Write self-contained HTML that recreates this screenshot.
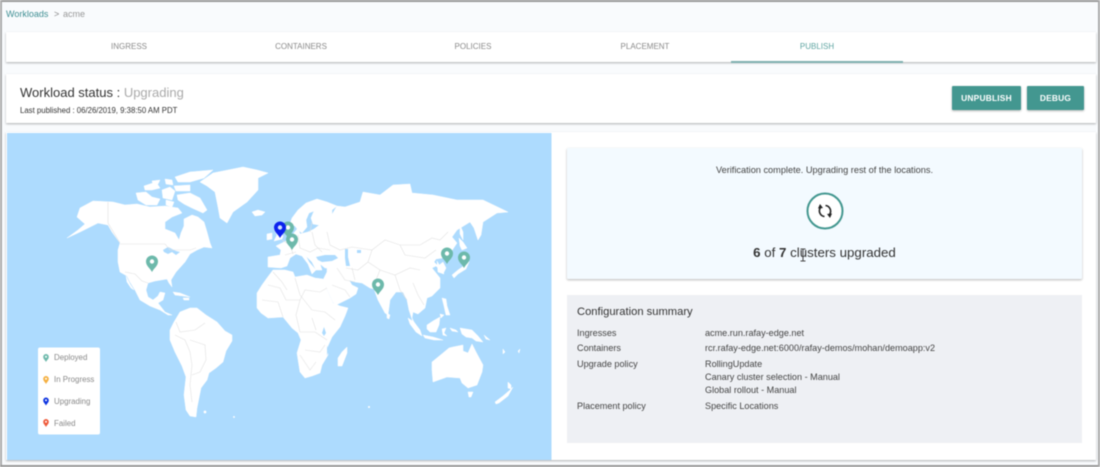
<!DOCTYPE html>
<html>
<head>
<meta charset="utf-8">
<style>
html,body{margin:0;padding:0;background:#fff}
body{width:1100px;height:467px;overflow:hidden;position:relative;font-family:"Liberation Sans",sans-serif}
#p{position:absolute;left:0;top:0;width:1100px;height:467px;background:#F9FBFD;filter:blur(.5px);overflow:hidden}
#p div{position:absolute;box-sizing:border-box}
.t{white-space:nowrap;line-height:12px}
.tab{top:41px;width:172px;text-align:center;font-size:8px;color:#8a8a8a;line-height:12px}
.btn{background:#439790;color:#fff;font-size:8.4px;font-weight:bold;text-align:center;line-height:24px;height:24px;top:86px;border-radius:1px;box-shadow:0 1px 2px rgba(0,0,0,.3);letter-spacing:.2px}
.l{left:577px;font-size:9.1px;color:#444;line-height:12px;white-space:nowrap}
.v{left:705px;font-size:9.1px;color:#444;line-height:12px;white-space:nowrap}
.lg{left:54px;font-size:7.9px;color:#8a8a8a;line-height:10px;white-space:nowrap}
</style>
</head>
<body>
<div id="p">
<div style="left:0;top:0;width:1100px;height:1.5px;background:#999"></div>
<div style="left:0;top:0;width:1.5px;height:467px;background:#aaa"></div>
<div style="left:0;top:465px;width:1100px;height:2px;background:#999"></div>
<div style="left:1098px;top:0;width:2px;height:467px;background:#aaa"></div>

<div class="t" style="left:6px;top:8px;font-size:9px;color:#3f8f93">Workloads</div>
<div class="t" style="left:54px;top:8px;font-size:9px;color:#888">&gt;</div>
<div class="t" style="left:63px;top:8px;font-size:9px;color:#999">acme</div>

<div style="left:6px;top:32px;width:1090px;height:30px;background:#fff;box-shadow:0 1px 2px rgba(0,0,0,.3)"></div>
<div class="tab" style="left:43px">INGRESS</div>
<div class="tab" style="left:215px">CONTAINERS</div>
<div class="tab" style="left:387px">POLICIES</div>
<div class="tab" style="left:559px">PLACEMENT</div>
<div class="tab" style="left:731px;color:#5fa5a2">PUBLISH</div>
<div style="left:731px;top:61px;width:172px;height:2px;background:#7fb0b0"></div>

<div style="left:6px;top:74px;width:1090px;height:48.5px;background:#fff;box-shadow:0 1px 2px rgba(0,0,0,.3)"></div>
<div class="t" style="left:20px;top:85px;font-size:13px;line-height:15px;color:#333">Workload status : <span style="color:#aaa">Upgrading</span></div>
<div class="t" style="left:20px;top:105px;font-size:7.8px;color:#333">Last published : 06/26/2019, 9:38:50 AM PDT</div>
<div class="btn" style="left:952px;width:69px">UNPUBLISH</div>
<div class="btn" style="left:1027px;width:57px">DEBUG</div>

<div style="left:6px;top:132px;width:1090px;height:328px;background:#fff;box-shadow:0 1px 2px rgba(0,0,0,.3)"></div>

<svg style="position:absolute;left:0;top:0" width="1100" height="467" viewBox="0 0 1100 467">
<defs><clipPath id="c"><rect x="7" y="133" width="544.5" height="327"/></clipPath></defs>
<g clip-path="url(#c)">
<rect x="7" y="133" width="545" height="327" fill="#ADDBFE"/>
<g fill="#fff" stroke="#fff" stroke-width=".5" stroke-linejoin="round">
<!-- North America -->
<path d="M77,217 L80,208 L93,201 L113,202 L125,205 L137,204 L150,207 L165,206 L178,208 L182,213 L172,217 L165,222 L165,229 L175,233 L179,240 L181,233 L184,226 L184,219 L192,215 L198,217 L204,222 L207,232 L210,243 L212,248 L204,247 L197,250 L190,254 L185,262 L176,272 L171,280 L172,287 L169,283 L167,279 L155,281 L148,283 L146,290 L148,297 L153,300 L158,296 L160,292 L165,293 L163,300 L158,303 L165,312 L172,315 L168,315 L160,310 L150,306 L140,300 L135,290 L130,282 L127,276 L120,272 L118,262 L118,250 L120,243 L112,232 L108,225 L98,223 L90,227 L80,232 L67,238 L78,230 L85,224Z"/>
<!-- Baja -->
<path d="M126,276 L130,284 L134,290 L131,288 L127,282Z"/>
<!-- Arctic islands -->
<path d="M175,177 L190,172 L213,170 L204,178 L190,182 L178,182Z"/>
<path d="M177,195 L190,193 L200,198 L207,210 L203,213 L192,208 L184,204 L178,200Z"/>
<path d="M136,193 L146,192 L152,197 L160,199 L157,205 L146,205 L138,200Z"/>
<path d="M144,186 L156,182 L160,188 L152,190 L145,190Z"/>
<path d="M162,190 L170,187 L175,191 L172,200 L163,198Z"/>
<path d="M165,179 L172,180 L173,185 L166,184Z"/>
<path d="M174,186 L190,185 L190,191 L176,191Z"/>
<path d="M152,181 L160,180 L158,184 L153,184Z"/>
<path d="M166,200 L174,202 L172,207 L166,205Z"/>
<!-- Greenland -->
<path d="M200,182 L213,173 L243,167 L257,170 L268,173 L258,178 L258,190 L247,202 L233,212 L227,223 L220,218 L218,207 L215,192 L207,186Z"/>
<!-- Iceland -->
<path d="M252,212 L258,210 L265,212 L262,215 L255,216Z"/>
<!-- Caribbean -->
<path d="M173,292 L180,293 L190,297 L183,296 L175,295Z"/>
<path d="M183,298 L189,298 L189,300 L184,300Z"/>
<!-- South America -->
<path d="M170,330 L174,322 L180,312 L190,308 L197,308 L206,315 L217,322 L225,331 L232,335 L232,341 L226,351 L223,362 L216,368 L209,373 L207,380 L201,388 L199,398 L197,408 L196,417 L190,416 L186,410 L184,395 L186,377 L182,366 L175,352 L170,340Z"/>
<!-- Africa -->
<path d="M323,279 L326,288 L333,303 L340,306 L348,308 L345,316 L340,327 L332,337 L327,348 L328,355 L322,365 L320,373 L312,376 L305,378 L300,372 L297,353 L301,340 L298,333 L292,328 L283,317 L268,318 L261,313 L257,308 L257,293 L262,285 L267,278 L273,270 L285,270 L293,272 L295,277 L307,275 L315,278Z"/>
<!-- Madagascar -->
<path d="M347,347 L347,353 L342,366 L338,366 L338,358 L342,352Z"/>
<!-- UK / Ireland -->
<path d="M276,223 L281,224 L279,229 L283,236 L282,239 L274,241 L277,235 L274,229Z"/>
<path d="M267,234 L272,233 L272,239 L267,240Z"/>
<!-- Scandinavia -->
<path d="M290,224 L292,218 L298,210 L306,203 L317,199 L327,202 L337,206 L332,210 L332,218 L324,226 L313,224 L311,218 L314,211 L309,213 L306,220 L307,227 L302,233 L298,230 L295,226Z"/>
<!-- Eurasia -->
<path d="M268,267 L268,257 L280,255 L281,250 L276,246 L286,241 L293,234 L298,228 L300,234 L308,232 L314,229 L318,226 L322,224 L330,218 L337,206 L345,207 L360,202 L363,192 L380,195 L393,185 L410,184 L412,193 L433,195 L457,200 L483,200 L508,212 L497,213 L483,222 L481,235 L478,240 L474,228 L470,222 L457,230 L452,237 L457,243 L449,255 L442,258 L436,259 L434,262 L438,266 L443,262 L446,268 L443,274 L440,270 L436,266 L432,268 L440,278 L440,288 L432,296 L427,298 L425,308 L418,314 L413,312 L412,318 L417,328 L413,322 L409,310 L407,300 L403,292 L396,292 L390,300 L388,315 L385,313 L378,300 L374,289 L370,288 L362,283 L355,282 L349,280 L352,285 L358,288 L356,294 L350,298 L336,305 L333,302 L325,285 L323,280 L327,272 L327,268 L325,268 L320,264 L322,270 L316,270 L312,262 L306,256 L309,262 L316,270 L312,274 L308,264 L302,256 L296,254 L290,258 L287,266 L281,268Z"/>
<!-- Japan etc -->
<path d="M452,275 L458,270 L465,265 L467,255 L469,262 L466,269 L458,274 L454,278Z"/>
<path d="M459,238 L463,242 L467,248 L462,250 L460,246Z"/>
<path d="M460,225 L463,232 L463,240 L460,234Z"/>
<path d="M477,225 L480,232 L478,240 L476,232Z"/>
<path d="M437,261 L441,268 L444,274 L438,272Z"/>
<!-- Sri Lanka -->
<path d="M387,313 L390,315 L389,319 L387,318Z"/>
<!-- SE Asia islands -->
<path d="M408,318 L414,322 L420,330 L422,336 L416,332 L410,324Z"/>
<path d="M423,335 L433,337 L443,340 L434,340 L425,338Z"/>
<path d="M427,325 L433,321 L440,317 L439,325 L436,332 L430,332 L427,329Z"/>
<path d="M442,329 L446,328 L444,333 L447,336 L443,335Z"/>
<path d="M442,298 L446,299 L447,306 L450,315 L446,315 L444,306Z"/>
<path d="M440,314 L444,315 L441,318Z"/>
<path d="M460,328 L466,329 L472,330 L478,336 L483,342 L476,341 L472,338 L466,337 L462,334Z"/>
<path d="M450,328 L456,330 L458,332 L452,331Z"/>
<path d="M484,335 L490,340 L486,339Z"/>
<path d="M503,349 L505,352 L503,354Z"/>
<path d="M518,351 L520,349 L519,353Z"/>
<!-- Australia -->
<path d="M432,362 L443,353 L449,348 L453,347 L463,345 L463,351 L468,353 L472,344 L476,352 L483,365 L482,372 L477,385 L468,388 L462,383 L460,378 L447,377 L433,382 L432,370Z"/>
<path d="M468,392 L473,392 L471,397 L469,397Z"/>
<!-- NZ -->
<path d="M495,402 L503,396 L510,390 L513,387 L508,396 L499,403 L496,404Z"/>
<path d="M508,382 L511,385 L511,389 L508,388Z"/>
<!-- tiny -->
<circle cx="369" cy="407" r=".8"/>
<circle cx="205" cy="412" r="1.2"/>
<circle cx="234" cy="417" r=".7"/>
</g>
<g fill="#ADDBFE">
<path d="M163,250 L168,247 L172,249 L176,251 L180,252 L176,255 L172,252 L168,254 L164,252Z"/>
<path d="M316,257 L325,255 L335,255 L338,258 L332,261 L322,262 L318,260Z"/>
<path d="M345,249 L348,249 L348,257 L350,266 L346,266 L345,258Z"/>
<path d="M357,250 L361,250 L361,253 L357,253Z"/>
<path d="M322,333 L324,327 L326,333 L324,336Z"/>
<path d="M327,345 L328,352 L327,356Z"/>
</g>
<g fill="none" stroke="#e2e2e2" stroke-width=".6">
<path d="M108,202 L108,223 L120,243"/>
<path d="M120,244 L165,244 L170,250 L190,250 L196,248"/>
<path d="M125,272 L135,274 L142,281 L148,283"/>
<path d="M175,335 L185,340 L190,352 L192,365 L190,385 L192,402"/>
<path d="M190,340 L205,345 L206,360 L200,372 L192,375"/>
<path d="M176,322 L180,332 L195,330 L205,323"/>
<path d="M268,285 L280,288 L286,300 L300,300 L305,290 L320,292 L327,288"/>
<path d="M273,272 L282,282 L287,290 M295,278 L300,295 L312,310 L325,312 L335,320"/>
<path d="M262,300 L278,302 L283,317 M300,300 L296,315 L300,332 L315,332 L327,340"/>
<path d="M305,350 L320,352 L325,345 M300,355 L310,370 L316,362 M312,318 L316,330"/>
<path d="M282,240 L290,245 L293,254 M298,235 L300,248 L310,252 L318,248 L330,250 M312,232 L315,245 L322,252 M285,255 L296,252"/>
<path d="M327,232 L330,245 L340,250 L352,247 L372,250 L385,240 L400,245 L420,245 L432,238 L440,240 L448,232"/>
<path d="M372,250 L368,262 L380,270 L395,275 L410,268 L420,270 M400,245 L405,255 L425,258 L436,250 M352,268 L355,280 M368,262 L358,270 L346,268 M337,268 L345,280 L355,282"/>
<path d="M380,270 L374,285 M395,275 L400,290 L407,300 M413,283 L418,295 L424,305 M332,285 L345,290 L350,297 M310,232 L312,222"/>
</g>
<!-- pins -->
<g fill="#6DB9AB">
<g transform="translate(288,238)"><path d="M0,0 C-2,-4 -6,-6 -6,-10.5 A6,6 0 1 1 6,-10.5 C6,-6 2,-4 0,0Z"/><circle cy="-10.5" r="2.2" fill="#fff"/></g>
<g transform="translate(152,272)"><path d="M0,0 C-2,-4 -6,-6 -6,-10.5 A6,6 0 1 1 6,-10.5 C6,-6 2,-4 0,0Z"/><circle cy="-10.5" r="2.2" fill="#fff"/></g>
<g transform="translate(292,250)"><path d="M0,0 C-2,-4 -6,-6 -6,-10.5 A6,6 0 1 1 6,-10.5 C6,-6 2,-4 0,0Z"/><circle cy="-10.5" r="2.2" fill="#fff"/></g>
<g transform="translate(378,295)"><path d="M0,0 C-2,-4 -6,-6 -6,-10.5 A6,6 0 1 1 6,-10.5 C6,-6 2,-4 0,0Z"/><circle cy="-10.5" r="2.2" fill="#fff"/></g>
<g transform="translate(447,264)"><path d="M0,0 C-2,-4 -6,-6 -6,-10.5 A6,6 0 1 1 6,-10.5 C6,-6 2,-4 0,0Z"/><circle cy="-10.5" r="2.2" fill="#fff"/></g>
<g transform="translate(464,268)"><path d="M0,0 C-2,-4 -6,-6 -6,-10.5 A6,6 0 1 1 6,-10.5 C6,-6 2,-4 0,0Z"/><circle cy="-10.5" r="2.2" fill="#fff"/></g>
</g>
<g transform="translate(280,238)" fill="#0B22EE"><path d="M0,0 C-2,-4 -6,-6 -6,-10.5 A6,6 0 1 1 6,-10.5 C6,-6 2,-4 0,0Z"/><circle cy="-10.5" r="2.2" fill="#cfe0ff"/></g>
</g>
<rect x="38" y="347.5" width="62" height="87" rx="2" fill="#fff"/>
<g transform="translate(46,362)" fill="#6DB9AB"><path d="M0,0 C-1,-2 -2.8,-3 -2.8,-5.2 A2.8,2.8 0 1 1 2.8,-5.2 C2.8,-3 1,-2 0,0Z"/><circle cy="-5.2" r="1" fill="#fff"/></g>
<g transform="translate(46,384)" fill="#F5B041"><path d="M0,0 C-1,-2 -2.8,-3 -2.8,-5.2 A2.8,2.8 0 1 1 2.8,-5.2 C2.8,-3 1,-2 0,0Z"/><circle cy="-5.2" r="1" fill="#fff"/></g>
<g transform="translate(46,405.5)" fill="#0B32E0"><path d="M0,0 C-1,-2 -2.8,-3 -2.8,-5.2 A2.8,2.8 0 1 1 2.8,-5.2 C2.8,-3 1,-2 0,0Z"/><circle cy="-5.2" r="1" fill="#fff"/></g>
<g transform="translate(46,427)" fill="#EE5A3A"><path d="M0,0 C-1,-2 -2.8,-3 -2.8,-5.2 A2.8,2.8 0 1 1 2.8,-5.2 C2.8,-3 1,-2 0,0Z"/><circle cy="-5.2" r="1" fill="#fff"/></g>
</svg>
<div class="lg" style="top:353px">Deployed</div>
<div class="lg" style="top:375px">In Progress</div>
<div class="lg" style="top:397px">Upgrading</div>
<div class="lg" style="top:419px">Failed</div>

<div style="left:567px;top:148px;width:515px;height:131px;background:#F3FAFF;box-shadow:0 1px 2px rgba(0,0,0,.28);border-radius:1px"></div>
<div class="t" style="left:567px;width:515px;top:164px;text-align:center;font-size:9.2px;color:#444">Verification complete. Upgrading rest of the locations.</div>
<svg style="position:absolute;left:806px;top:191.5px" width="38" height="38" viewBox="0 0 38 38">
<circle cx="19" cy="19" r="17.5" fill="#fff" stroke="#439790" stroke-width="2"/>
<path d="M19.5,13.5 A5.7,5.7 0 0 1 23.5,22.5 M18.5,24.5 A5.7,5.7 0 0 1 14.5,15.5" fill="none" stroke="#222" stroke-width="1.6"/>
<path d="M21,22 L26,21.5 L24,26Z M17,16 L12,16.5 L14,12Z" fill="#222"/>
</svg>
<div class="t" style="left:567px;width:515px;top:245px;text-align:center;font-size:13.3px;line-height:16px;color:#333"><b>6</b> of <b>7</b> clusters upgraded</div>
<svg style="position:absolute;left:799px;top:248px" width="8" height="14" viewBox="0 0 8 14"><path d="M1.5,1 L6.5,1 M4,1 L4,13 M1.5,13 L6.5,13" stroke="#444" stroke-width="1" fill="none"/></svg>

<div style="left:567px;top:295px;width:515px;height:148px;background:#EEF0F4"></div>
<div class="t" style="left:577px;top:306px;font-size:11.2px;color:#333">Configuration summary</div>
<div class="l" style="top:327px">Ingresses</div><div class="v" style="top:327px">acme.run.rafay-edge.net</div>
<div class="l" style="top:342px">Containers</div><div class="v" style="top:342px">rcr.rafay-edge.net:6000/rafay-demos/mohan/demoapp:v2</div>
<div class="l" style="top:358px">Upgrade policy</div><div class="v" style="top:358px">RollingUpdate</div>
<div class="v" style="top:371px">Canary cluster selection - Manual</div>
<div class="v" style="top:384px">Global rollout - Manual</div>
<div class="l" style="top:400px">Placement policy</div><div class="v" style="top:400px">Specific Locations</div>
</div>
</body>
</html>
